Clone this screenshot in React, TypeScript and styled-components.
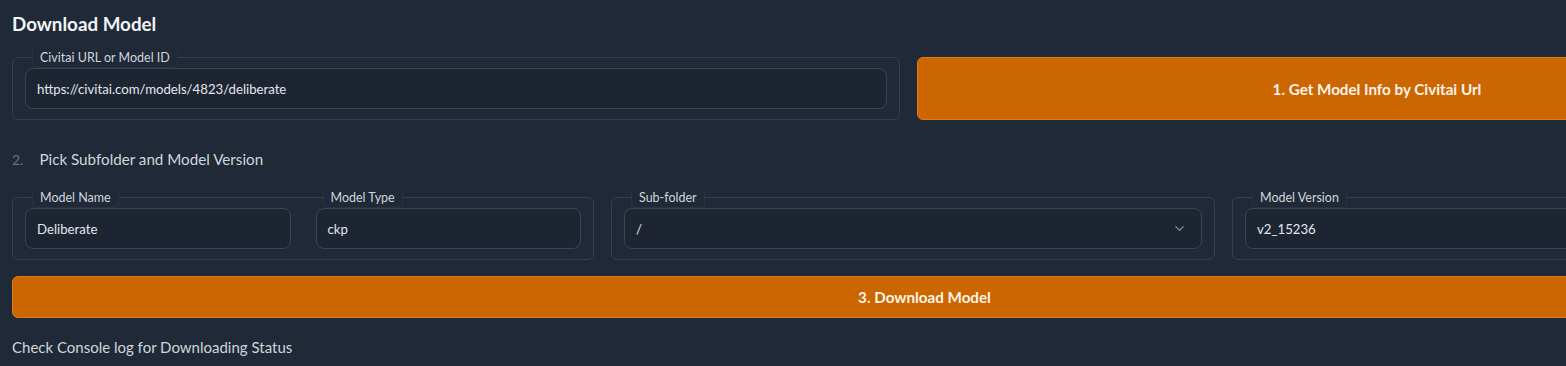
import styled, { createGlobalStyle } from 'styled-components'
import { ChevronDown } from 'lucide-react'

const GlobalStyle = createGlobalStyle`
  html, body {
    margin: 0;
    padding: 0;
    background: #1f2937;
    overflow: hidden;
  }
  body {
    font-family: Lato, "Noto Sans", sans-serif;
    color: #e5e7eb;
  }
`

const Page = styled.div`
  width: 1825px;
  padding: 0 0 0 12px;
  height: 366px;
`

const Title = styled.h2`
  margin: 0;
  padding-top: 12px;
  font-size: 18.8px;
  font-weight: 700;
  line-height: 24px;
  color: #f3f4f6;
`

const Row = styled.div<{ $gap: number; $top: number }>`
  display: flex;
  align-items: stretch;
  gap: ${({ $gap }) => $gap}px;
  margin-top: ${({ $top }) => $top}px;
`

const Group = styled.div<{ $width?: number }>`
  display: flex;
  gap: 25px;
  flex: ${({ $width }) => ($width ? `0 0 ${$width}px` : '1 1 0')};
  box-sizing: border-box;
  border: 1px solid #344050;
  border-radius: 6px;
  padding: 0 12px 10px 12px;
`

const Field = styled.div`
  display: flex;
  flex-direction: column;
  flex: 1 1 0;
  min-width: 0;
`

const Label = styled.span`
  align-self: flex-start;
  margin: -10px 0 0 7px;
  padding: 0 7px;
  height: 19px;
  line-height: 19px;
  font-size: 12.5px;
  color: #d1d5db;
  background: #1f2937;
  border: 1px solid #283242;
  border-top: none;
  border-radius: 4px;
  white-space: nowrap;
`

const Input = styled.div`
  display: flex;
  align-items: center;
  justify-content: space-between;
  height: 41px;
  box-sizing: border-box;
  padding: 0 14px 0 11px;
  border: 1px solid #394454;
  border-radius: 8px;
  background: #1d2533;
  font-size: 13.2px;
  color: #e5e7eb;
  white-space: nowrap;
`

const Chevron = styled(ChevronDown)`
  color: #8b95a5;
  flex: none;
`

const OrangeButton = styled.button<{ $height: number; $width?: number }>`
  flex: ${({ $width }) => ($width ? `0 0 ${$width}px` : '1 1 0')};
  height: ${({ $height }) => $height}px;
  box-sizing: border-box;
  border: 1px solid #e07a1a;
  border-radius: 6px;
  background: #cc6600;
  color: #fdf4ea;
  font-family: Lato, "Noto Sans", sans-serif;
  font-size: 15.2px;
  font-weight: 700;
`

const Step = styled.div`
  display: flex;
  align-items: center;
  gap: 16px;
  margin-top: 28px;
  height: 22px;
  font-size: 15.2px;
  color: #d1d5db;
`

const StepNumber = styled.span`
  color: #6b7280;
  font-size: 14px;
`

const Status = styled.p`
  margin: 18px 0 0 0;
  font-size: 15px;
  line-height: 22px;
  color: #d1d5db;
`

export default function App() {
  return (
    <>
      <GlobalStyle />
      <Page>
        <Title>Download Model</Title>
        <Row $gap={17} $top={21}>
          <Group $width={888}>
            <Field>
              <Label>Civitai URL or Model ID</Label>
              <Input>https://civitai.com/models/4823/deliberate</Input>
            </Field>
          </Group>
          <OrangeButton $height={63}>1. Get Model Info by Civitai Url</OrangeButton>
        </Row>
        <Step>
          <StepNumber>2.</StepNumber>
          Pick Subfolder and Model Version
        </Step>
        <Row $gap={17} $top={27}>
          <Group $width={582}>
            <Field>
              <Label>Model Name</Label>
              <Input>Deliberate</Input>
            </Field>
            <Field>
              <Label>Model Type</Label>
              <Input>ckp</Input>
            </Field>
          </Group>
          <Group $width={604}>
            <Field>
              <Label>Sub-folder</Label>
              <Input>
                /
                <Chevron size={15} strokeWidth={1.75} />
              </Input>
            </Field>
          </Group>
          <Group>
            <Field>
              <Label>Model Version</Label>
              <Input>v2_15236</Input>
            </Field>
          </Group>
        </Row>
        <Row $gap={0} $top={16}>
          <OrangeButton $height={42}>3. Download Model</OrangeButton>
        </Row>
        <Status>Check Console log for Downloading Status</Status>
      </Page>
    </>
  )
}
